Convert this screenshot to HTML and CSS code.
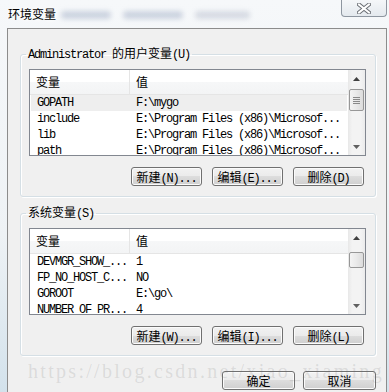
FILE: index.html
```html
<!DOCTYPE html>
<html>
<head>
<meta charset="utf-8">
<title>环境变量</title>
<link rel="stylesheet" href="styles.css">
</head>
<body>
<div class="window">
  <div class="titlebar">
    <span class="title">环境变量</span>
    <div class="blur-area">
      <span class="blob b1"></span>
      <span class="blob b2"></span>
      <span class="blob b3"></span>
    </div>
    <div class="close">
      <svg width="14" height="11" viewBox="0 0 14 11">
        <path d="M2 1.5 L12 9.5 M12 1.5 L2 9.5" stroke="#6a6e74" stroke-width="4" stroke-linecap="square" fill="none"/>
        <path d="M2 1.5 L12 9.5 M12 1.5 L2 9.5" stroke="#ffffff" stroke-width="2" stroke-linecap="square" fill="none"/>
      </svg>
    </div>
  </div>
  <div class="client">
    <fieldset class="group g1">
      <legend><span class="m">Administrator </span>的用户变量<span class="m">(U)</span></legend>
      <div class="list">
        <div class="list-main">
          <div class="header"><div class="c1">变量</div><div class="c2">值</div></div>
          <div class="row sel"><div class="c1 m">GOPATH</div><div class="c2 m">F:\mygo</div></div>
          <div class="row"><div class="c1 m">include</div><div class="c2 m">E:\Program Files (x86)\Microsof...</div></div>
          <div class="row"><div class="c1 m">lib</div><div class="c2 m">E:\Program Files (x86)\Microsof...</div></div>
          <div class="row"><div class="c1 m">path</div><div class="c2 m">E:\Program Files (x86)\Microsof...</div></div>
        </div>
        <div class="scrollbar">
          <div class="arrow"><svg width="7" height="4" viewBox="0 0 7 4"><path d="M0 4 L3.5 0 L7 4 Z" fill="#404040"/></svg></div>
          <div class="track">
            <div class="thumb t1">
              <svg width="7" height="7" viewBox="0 0 7 7"><path d="M0 0.5 H7 M0 2.5 H7 M0 4.5 H7 M0 6.5 H7" stroke="#8a8a8a" stroke-width="1"/></svg>
            </div>
          </div>
          <div class="arrow"><svg width="7" height="4" viewBox="0 0 7 4"><path d="M0 0 L3.5 4 L7 0 Z" fill="#606060"/></svg></div>
        </div>
      </div>
      <div class="buttons">
        <button class="btn">新建<span class="m">(N)...</span></button>
        <button class="btn">编辑<span class="m">(E)...</span></button>
        <button class="btn">删除<span class="m">(D)</span></button>
      </div>
    </fieldset>

    <fieldset class="group g2">
      <legend>系统变量<span class="m">(S)</span></legend>
      <div class="list">
        <div class="list-main">
          <div class="header"><div class="c1">变量</div><div class="c2">值</div></div>
          <div class="row"><div class="c1 m">DEVMGR_SHOW_...</div><div class="c2 m">1</div></div>
          <div class="row"><div class="c1 m">FP_NO_HOST_C...</div><div class="c2 m">NO</div></div>
          <div class="row"><div class="c1 m">GOROOT</div><div class="c2 m">E:\go\</div></div>
          <div class="row"><div class="c1 m">NUMBER_OF_PR...</div><div class="c2 m">4</div></div>
        </div>
        <div class="scrollbar">
          <div class="arrow"><svg width="7" height="4" viewBox="0 0 7 4"><path d="M0 4 L3.5 0 L7 4 Z" fill="#404040"/></svg></div>
          <div class="track">
            <div class="thumb t2"></div>
          </div>
          <div class="arrow"><svg width="7" height="4" viewBox="0 0 7 4"><path d="M0 0 L3.5 4 L7 0 Z" fill="#606060"/></svg></div>
        </div>
      </div>
      <div class="buttons">
        <button class="btn">新建<span class="m">(W)...</span></button>
        <button class="btn">编辑<span class="m">(I)...</span></button>
        <button class="btn">删除<span class="m">(L)</span></button>
      </div>
    </fieldset>

    <div class="dialog-buttons">
      <button class="btn btn-dlg">确定</button>
      <button class="btn btn-dlg">取消</button>
    </div>
  </div>
  <div class="watermark">https://blog.csdn.net/xiao_xiaming</div>
</div>
</body>
</html>
```

FILE: styles.css
```css
* {
  box-sizing: border-box;
}

html,
body {
  margin: 0;
  padding: 0;
}

body {
  width: 389px;
  height: 392px;
  overflow: hidden;
  font-family: "Noto Sans CJK SC", "Noto Sans", sans-serif;
  font-size: 12px;
  color: #000;
}

.window {
  position: relative;
  width: 389px;
  height: 392px;
  display: flex;
  flex-direction: column;
  overflow: hidden;
  background: linear-gradient(#f6f8fa, #eef2f5 60%, #d3e2ec);
}

/* ---------- title bar ---------- */
.titlebar {
  flex: none;
  height: 28px;
  display: flex;
  align-items: flex-start;
}

.title {
  margin: 6px 0 0 8px;
  line-height: 16px;
  font-size: 12px;
  text-shadow: 0 0 6px #fff, 0 0 10px #fff;
}

.blur-area {
  display: flex;
  align-items: center;
  gap: 12px;
  margin: 11px 0 0 5px;
}

.blob {
  display: block;
  height: 8px;
  border-radius: 4px;
  background: rgba(110, 128, 165, 0.3);
  filter: blur(2.5px);
}

.b1 { width: 50px; }
.b2 { width: 60px; }
.b3 { width: 55px; background: rgba(125, 135, 165, 0.25); }

.close {
  margin-left: auto;
  margin-right: 2px;
  width: 46px;
  height: 17px;
  border: 1px solid #8e96a0;
  border-top: none;
  border-radius: 0 0 4px 4px;
  background: linear-gradient(#f5f7f9, #e4e9ee);
  display: flex;
  align-items: center;
  justify-content: center;
}

/* ---------- client area ---------- */
.client {
  flex: 1;
  width: 380px;
  margin-left: 7px;
  border: 1px solid #8c8c8c;
  border-bottom: none;
  background: #f0f0f0;
  padding-left: 12px;
  display: flex;
  flex-direction: column;
}

.group {
  width: 356px;
  min-width: 0;
  margin: 0;
  padding: 7px 9px 10px 8px;
  border: 1px solid #d5dfe5;
  border-radius: 3px;
  box-shadow: inset 1px 1px 0 #fff, 1px 1px 0 #fff;
}

.g1 { margin-top: 17px; }
.g2 { margin-top: 8px; }

legend {
  padding: 0 2px;
  margin-left: -3px;
  line-height: 14px;
  font-size: 12px;
}

.m {
  font-family: "Liberation Mono", monospace;
  font-size: 12px;
  letter-spacing: -1.2px;
}

/* ---------- list view ---------- */
.list {
  display: flex;
  width: 337px;
  height: 87px;
  border: 1px solid #828790;
  background: #fff;
}

.list-main {
  flex: 1;
  min-width: 0;
  overflow: hidden;
}

.header {
  display: flex;
  height: 25px;
  line-height: 24px;
  border-bottom: 1px solid #e5e5e5;
  background: linear-gradient(#ffffff 0%, #ffffff 50%, #f6f7f8 50%, #f3f4f5 100%);
}

.header .c1 {
  border-right: 1px solid #e5e5e5;
}

.c1 {
  flex: none;
  width: 100px;
  padding-left: 7px;
  white-space: nowrap;
  overflow: hidden;
}

.header .c1 {
  padding-left: 6px;
}

.c2 {
  padding-left: 6px;
  white-space: nowrap;
}

.row {
  display: flex;
  height: 16px;
  line-height: 16px;
}

.row.sel {
  background: #eeeeee;
  margin: 0 1px;
}

.row.sel .c1 {
  width: 99px;
  padding-left: 6px;
}

/* ---------- scrollbar ---------- */
.scrollbar {
  flex: none;
  width: 17px;
  display: flex;
  flex-direction: column;
  background: linear-gradient(to right, #e8e8e8, #f3f3f3 25%, #f3f3f3 75%, #ebebeb);
}

.arrow {
  flex: none;
  height: 17px;
  display: flex;
  align-items: center;
  justify-content: center;
}

.track {
  flex: 1;
  display: flex;
  flex-direction: column;
  align-items: center;
}

.thumb {
  width: 15px;
  border: 1px solid #979797;
  border-radius: 2px;
  background: linear-gradient(to right, #f4f4f4, #e9e9e9 50%, #dcdcdc);
  display: flex;
  align-items: center;
  justify-content: center;
}

.t1 { margin-top: 2px; height: 22px; }
.t2 { margin-top: 6px; height: 16px; }

/* ---------- buttons ---------- */
.buttons {
  display: flex;
  justify-content: flex-end;
  gap: 10px;
  margin-top: 11px;
  padding-right: 2px;
}

.btn {
  width: 71px;
  height: 19px;
  padding: 0;
  margin: 0;
  border: 1px solid #707070;
  border-radius: 3px;
  background: linear-gradient(#f2f2f2 0%, #ebebeb 50%, #dddddd 50%, #cfcfcf 100%);
  box-shadow: inset 0 0 0 1px #fbfbfb;
  font-family: "Noto Sans CJK SC", sans-serif;
  font-size: 12px;
  line-height: 17px;
  color: #000;
  text-align: center;
}

.dialog-buttons {
  display: flex;
  justify-content: flex-end;
  gap: 8px;
  margin-top: 15px;
  padding-right: 10px;
}

.btn-dlg {
  width: 73px;
}

/* ---------- watermark ---------- */
.watermark {
  position: absolute;
  left: 28px;
  top: 359px;
  font-family: "Liberation Serif", serif;
  font-size: 20px;
  line-height: 24px;
  letter-spacing: 2.3px;
  white-space: nowrap;
  color: rgba(110, 110, 110, 0.17);
  pointer-events: none;
}
```
